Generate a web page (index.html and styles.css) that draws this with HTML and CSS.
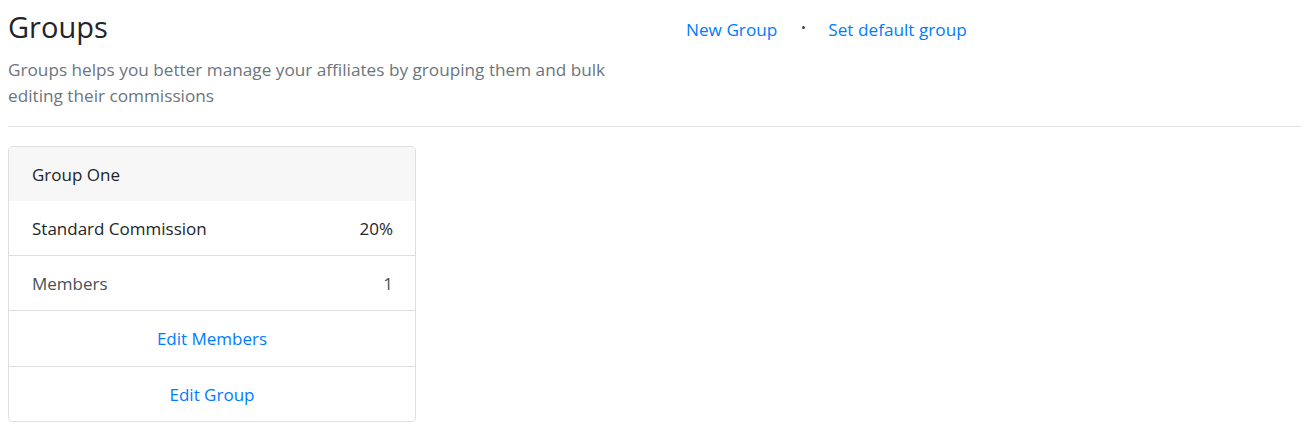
FILE: index.html
```html
<!DOCTYPE html>
<html lang="en">
<head>
<meta charset="utf-8">
<title>Groups</title>
<link rel="stylesheet" href="styles.css">
</head>
<body>
<div class="page">
  <div class="top">
    <div class="intro">
      <h1 class="title">Groups</h1>
      <p class="lead">Groups helps you better manage your affiliates by grouping them and bulk editing their commissions</p>
    </div>
    <nav class="actions">
      <a class="action-link" href="#">New Group</a>
      <span class="sep" aria-hidden="true"></span>
      <a class="action-link" href="#">Set default group</a>
    </nav>
  </div>
  <hr class="divider">
  <div class="card">
    <div class="card-header">Group One</div>
    <div class="card-row">
      <span>Standard Commission</span>
      <span>20%</span>
    </div>
    <div class="card-row muted">
      <span>Members</span>
      <span>1</span>
    </div>
    <a class="card-link" href="#">Edit Members</a>
    <a class="card-link" href="#">Edit Group</a>
  </div>
</div>
</body>
</html>
```
FILE: styles.css
```css
html, body {
  margin: 0;
  padding: 0;
  background: #fff;
}
body {
  margin: 8px;
  font-family: "Open Sans", "Noto Sans", sans-serif;
  color: #212529;
}
.top {
  display: flex;
  align-items: flex-start;
}
.intro {
  width: 646px;
  padding-top: 1px;
}
.title {
  margin: 0;
  font-size: 29px;
  font-weight: 400;
  line-height: 36px;
  color: #212529;
}
.lead {
  margin: 12px 0 0 0;
  font-size: 17.2px;
  line-height: 26px;
  color: #6c757d;
}
.actions {
  display: flex;
  align-items: center;
  padding-left: 16px;
  padding-top: 10px;
}
.action-link {
  display: block;
  padding: 0 16px;
  font-size: 17.2px;
  line-height: 24px;
  color: #007bff;
  text-decoration: none;
}
.sep {
  width: 3px;
  height: 3px;
  background: #444;
  border-radius: 50%;
  margin: 0 7px 6px 9px;
}
.divider {
  margin: 17px 0 19px 0;
  border: 0;
  border-top: 1px solid #e5e5e5;
}
.card {
  width: 406px;
  border: 1px solid #dfdfdf;
  border-radius: 4px;
  overflow: hidden;
  font-size: 17px;
}
.card-header {
  background: #f7f7f7;
  padding: 0 23px;
  height: 54px;
  display: flex;
  align-items: center;
  color: #212529;
}
.card-row {
  display: flex;
  justify-content: space-between;
  align-items: center;
  height: 54px;
  padding: 0 22px 0 23px;
  border-top: 1px solid #dfdfdf;
  color: #212529;
}
.card-header + .card-row {
  border-top: 0;
}
.card-row.muted {
  color: #495057;
}
.card-link {
  display: flex;
  justify-content: center;
  align-items: center;
  height: 55px;
  border-top: 1px solid #dfdfdf;
  color: #007bff;
  text-decoration: none;
}
.card-link:last-child {
  height: 54px;
}
```
